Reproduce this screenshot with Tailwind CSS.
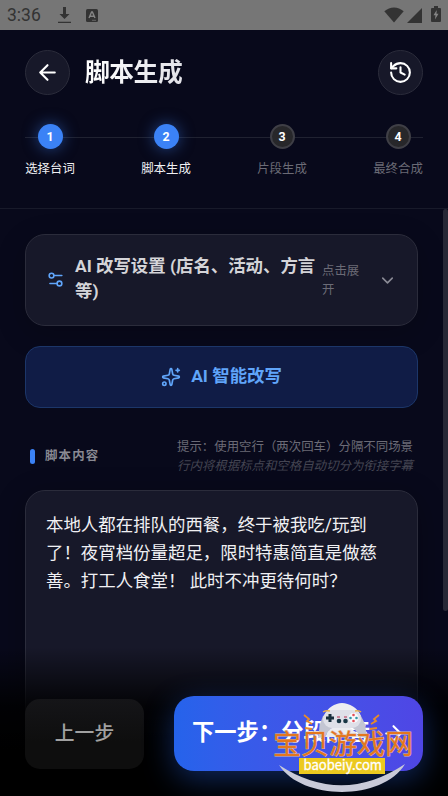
<!DOCTYPE html>
<html lang="zh-CN">
<head>
<meta charset="utf-8">
<meta name="viewport" content="width=device-width, initial-scale=1">
<title>脚本生成</title>
<script src="https://cdn.jsdelivr.net/npm/@tailwindcss/browser@4"></script>
</head>
<body class="bg-[#08091b] overflow-hidden">
<div class="relative flex h-[796px] w-[448px] flex-col overflow-hidden bg-[#08091b] text-white font-[Roboto,'Noto_Sans_CJK_SC',sans-serif]">
  <!-- status bar -->
  <div class="flex h-[30px] shrink-0 items-center bg-[#767676] pl-[7px] pr-[7px] text-[#333]">
    <span class="mt-[2px] w-[36px] text-[17.500px] leading-none">3:36</span>
    <svg class="ml-[15px] h-[17px] w-[13px]" viewBox="0 0 13 17" fill="currentColor"><path d="M5 0h3v7h3.500L6.500 12 1.500 7H5zM0 14.800h13v1.300H0z"/></svg>
    <svg class="ml-[15px] h-[13px] w-[12px]" viewBox="0 0 12 13"><rect width="12" height="13" rx="1.500" fill="#333"/><path d="M3 9 5.600 3h.8L9 9M4 7.200h4" fill="none" stroke="#858585" stroke-width="1.400"/><path d="M6.500 11.300h1m1 0h1" stroke="#999" stroke-width="1"/></svg>
    <svg class="ml-auto h-[16px] w-[20px]" viewBox="0 0 20 16" fill="currentColor"><path d="M.3 4.200C6-.9 14-.9 19.700 4.200L10 15.500z"/></svg>
    <svg class="ml-[3px] h-[15px] w-[15px]" viewBox="0 0 15 15" fill="currentColor"><path d="M15 0v15H0z"/></svg>
    <svg class="ml-[9px] mt-[-2px] h-[16px] w-[10px]" viewBox="0 0 10 16"><path d="M3 0h4v2h2q1 0 1 1v12q0 1-1 1H1q-1 0-1-1V3q0-1 1-1h2z" fill="#333"/><path d="M5.700 4 2.500 9.300h2L4 13.500l3.500-5.700h-2z" fill="#858585"/></svg>
  </div>

  <!-- header -->
  <header class="h-[179px] shrink-0 border-b border-[#181a2a] px-[25px] pt-[20px]">
    <div class="flex items-center">
      <button class="flex size-[45px] items-center justify-center rounded-full border border-[#2b2c3b] bg-[#171829]">
        <svg class="size-[25px]" viewBox="0 0 24 24" fill="none" stroke="white" stroke-width="2" stroke-linecap="round" stroke-linejoin="round"><path d="m12 19-7-7 7-7M19 12H5"/></svg>
      </button>
      <h1 class="ml-[15px] bg-gradient-to-r from-white to-[#e2e2e8] bg-clip-text text-[24.800px] font-bold tracking-[-0.500px] text-transparent">脚本生成</h1>
      <button class="ml-auto flex size-[45px] items-center justify-center rounded-full border border-[#2b2c3b] bg-[#171829]">
        <svg class="size-[25px]" viewBox="0 0 24 24" fill="none" stroke="white" stroke-width="2" stroke-linecap="round" stroke-linejoin="round"><path d="M3 12a9 9 0 1 0 9-9 9.750 9.750 0 0 0-6.740 2.740L3 8"/><path d="M3 3v5h5M12 7v5l4 2"/></svg>
      </button>
    </div>
    <div class="mt-[29px] grid grid-cols-1">
      <div class="col-start-1 row-start-1 mt-[13px] h-px bg-[#202231]"></div>
      <div class="z-10 col-start-1 row-start-1 flex justify-between text-[12.400px]">
        <div class="flex w-[50px] flex-col items-center"><span class="flex size-[25px] items-center justify-center rounded-full bg-[#3b82f6] pt-px font-bold shadow-[0_0_15px_rgba(59,130,246,0.5)]">1</span><span class="mt-[9px] whitespace-nowrap leading-[21px] text-[#f0f0f3]">选择台词</span></div>
        <div class="flex w-[50px] flex-col items-center"><span class="flex size-[25px] items-center justify-center rounded-full bg-[#3b82f6] pt-px font-bold shadow-[0_0_15px_rgba(59,130,246,0.5)]">2</span><span class="mt-[9px] whitespace-nowrap leading-[21px] text-[#f0f0f3]">脚本生成</span></div>
        <div class="flex w-[50px] flex-col items-center"><span class="flex size-[25px] items-center justify-center rounded-full border-2 border-[#3f3f46] bg-[#27272a] pt-px font-bold">3</span><span class="mt-[9px] whitespace-nowrap leading-[21px] text-[#6b6b76]">片段生成</span></div>
        <div class="flex w-[50px] flex-col items-center"><span class="flex size-[25px] items-center justify-center rounded-full border-2 border-[#3f3f46] bg-[#27272a] pt-px font-bold">4</span><span class="mt-[9px] whitespace-nowrap leading-[21px] text-[#6b6b76]">最终合成</span></div>
      </div>
    </div>
  </header>

  <!-- content -->
  <main class="flex min-h-0 flex-1 justify-between overflow-hidden pl-[25px]">
    <div class="flex w-[393px] shrink-0 flex-col pt-[25px]">
      <section class="flex h-[92px] shrink-0 items-center rounded-[20px] border border-[#2b2c3b] bg-[#171829] pl-[20px] pr-[20px] shadow-[0_8px_30px_rgba(0,0,0,0.2)]">
        <svg class="-mt-px size-[19px] shrink-0" viewBox="0 0 24 24" fill="none" stroke="#60a5fa" stroke-width="2" stroke-linecap="round"><path d="M20 7h-9M14 17H5"/><circle cx="17" cy="17" r="3"/><circle cx="7" cy="7" r="3"/></svg>
        <h2 class="-mt-[2px] ml-[10px] w-[242px] shrink-0 text-[17.400px] font-bold leading-[25px] text-[#d4d4d8]">AI 改写设置 (店名、活动、方言等)</h2>
        <span class="ml-[5px] w-[42px] shrink-0 text-[12.400px] leading-[19px] text-[#6b6b76]">点击展开</span>
        <svg class="ml-auto size-[19px] shrink-0" viewBox="0 0 24 24" fill="none" stroke="#8b8b96" stroke-width="2" stroke-linecap="round" stroke-linejoin="round"><path d="m6 9 6 6 6-6"/></svg>
      </section>
      <button class="mt-[20px] flex h-[62px] shrink-0 items-center justify-center gap-[10px] rounded-[15px] border border-[#1c3669] bg-[#101c46] text-[17.400px] font-bold text-[#60a5fa]">
        <svg class="size-[20px]" viewBox="0 0 24 24" fill="none" stroke="currentColor" stroke-width="2" stroke-linecap="round" stroke-linejoin="round"><path d="M11.017 2.814a1 1 0 0 1 1.966 0l1.051 5.558a2 2 0 0 0 1.594 1.594l5.558 1.051a1 1 0 0 1 0 1.966l-5.558 1.051a2 2 0 0 0-1.594 1.594l-1.051 5.558a1 1 0 0 1-1.966 0l-1.051-5.558a2 2 0 0 0-1.594-1.594l-5.558-1.051a1 1 0 0 1 0-1.966l5.558-1.051a2 2 0 0 0 1.594-1.594zM20 2v4M22 4h-4"/><circle cx="4" cy="20" r="2"/></svg>
        <span class="-mt-px">AI 智能改写</span>
      </button>
      <div class="mt-[29px] flex h-[38px] shrink-0 items-center pl-[5px] pr-[5px]">
        <span class="h-[15px] w-[5px] rounded-full bg-[#3b82f6]"></span>
        <h3 class="ml-[10px] text-[12.400px] font-bold tracking-[1.200px] text-[#898992]">脚本内容</h3>
        <div class="ml-auto whitespace-nowrap text-right text-[12.430px] leading-[19px]"><p class="text-[#6b6b76]">提示：使用空行（两次回车）分隔不同场景</p><p class="italic text-[#444552]">行内将根据标点和空格自动切分为衔接字幕</p></div>
      </div>
      <section class="mt-[15px] h-[320px] shrink-0 rounded-[20px] border border-[#2b2c3b] bg-[#171829] px-[20px] pt-[20px] shadow-[0_8px_30px_rgba(0,0,0,0.3)]">
        <p class="w-[340px] text-[17.430px] leading-[28px] text-[#f0f0f3]">本地人都在排队的西餐，终于被我吃/玩到了！夜宵档份量超足，限时特惠简直是做慈善。打工人食堂！ 此时不冲更待何时？</p>
      </section>
    </div>
    <div class="h-[402px] w-[5px] rounded-full bg-[#272836]"></div>
  </main>

  <!-- floating action bar -->
  <footer class="absolute inset-x-0 bottom-0 flex h-[149px] items-start justify-between bg-gradient-to-t from-black from-30% via-black/85 via-60% to-transparent px-[25px] pt-[50px]">
    <button class="mt-[2px] h-[70px] w-[119px] rounded-[15px] bg-[linear-gradient(#151518,#0e0e0e_60%)] text-[19.800px] font-medium text-[#a1a1a1]">上一步</button>
    <button class="-mt-px flex h-[75px] w-[249px] items-center rounded-[20px] bg-gradient-to-r from-[#2563eb] to-[#4f46e5] pl-[18px] text-[22.300px] font-bold shadow-[0_8px_30px_rgba(37,99,235,0.4)]">
      <span class="-mt-[2px] whitespace-nowrap">下一步：分段配音</span>
      <svg class="ml-[11px] size-[25px]" viewBox="0 0 24 24" fill="none" stroke="white" stroke-width="2" stroke-linecap="round" stroke-linejoin="round"><path d="M5 12h14M12 5l7 7-7 7"/></svg>
    </button>
  </footer>

  <!-- site watermark -->
  <svg class="absolute left-[264px] top-[690px] h-[106px] w-[160px]" viewBox="0 0 160 106">
    <path d="M15 75Q78 116 141 74C119 111 38 111 15 75z" fill="#c8cad8"/>
    <path d="M60 26C63 18 71 13 78 13s16 5 19 13z" fill="#eeeef1"/>
    <path d="M59 26Q78 20 97 26L101 34 103 48 96 47Q91 37 84 36H73Q66 37 61 47L54 48 56 34z" fill="#c3c5d2"/>
    <path d="M61 47Q66 35 78 36T95 47z" fill="#ececf0"/>
    <rect x="59" y="20" width="38" height="18" rx="9" fill="#dfe0e8"/>
    <path d="M59 22q3-2 7-1m25 0q4-1 6 1" stroke="#e7ae4d" stroke-width="1.500" fill="none"/>
    <path d="M66 24v8m-4-4h8" stroke="#192f3d" stroke-width="3"/>
    <g fill="#183645"><circle cx="75" cy="31" r="2.300"/><circle cx="81.500" cy="31" r="2.300"/></g>
    <path d="M73 27h3m4 0h3" stroke="#b72d4f" stroke-width="1.200"/>
    <circle cx="89.500" cy="28" r="5" fill="#f8f8fb"/><g fill="#e44d57"><circle cx="89.500" cy="25" r="1.300"/><circle cx="89.500" cy="31" r="1.300"/></g><g fill="#3297a8"><circle cx="86.500" cy="28" r="1.300"/><circle cx="92.500" cy="28" r="1.300"/></g>
    <g fill="none" stroke="#e78b29" stroke-width="1.800"><path d="m40 25 5 4-2 2 5 3M115 25l-5 4 2 2-5 3M41 38l7 1M113 38l-7 1"/></g>
    <text x="9" y="63.500" font-family="Noto Sans CJK SC, sans-serif" font-size="27.500" font-weight="400" textLength="140" lengthAdjust="spacingAndGlyphs" fill="#e4761e" stroke="#d9b7a5" stroke-width="1" paint-order="stroke">宝贝游戏网</text>
    <rect x="35" y="68" width="86" height="16" fill="#ecc91f"/>
    <text x="39.500" y="80" font-family="Noto Sans CJK SC, sans-serif" font-size="14" font-weight="400" textLength="78.500" lengthAdjust="spacingAndGlyphs" fill="white" stroke="white" stroke-width=".3">baobeiy.com</text>
  </svg>
</div>
</body>
</html>
